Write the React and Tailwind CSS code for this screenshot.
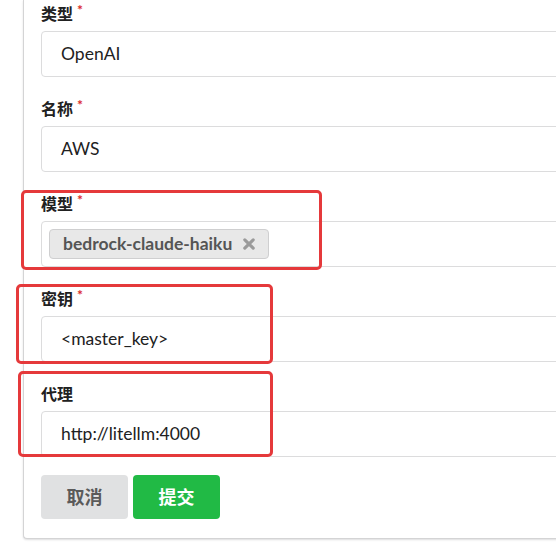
import React from 'react';

const fields = [
  { label: '类型', required: true, value: 'OpenAI' },
  { label: '名称', required: true, value: 'AWS' },
  { label: '模型', required: true, tag: 'bedrock-claude-haiku' },
  { label: '密钥', required: true, value: '<master_key>' },
  { label: '代理', required: false, value: 'http://litellm:4000' },
];

const Field = ({ field }) => (
  <div className="mb-[21px]">
    <div className="h-[22px] mb-[6px] flex items-center text-[16px] font-bold leading-[22px] text-[#212121]">
      {field.label}
      {field.required && <span className="ml-[4px] -mt-[9px] text-[14px] text-[#db2828]">*</span>}
    </div>
    <div className="h-[46px] w-full rounded-[4px] border border-[#dcdcdd] bg-white flex items-center px-[19px] text-[17.5px] text-[#212121]">
      {field.tag ? (
        <span className="-ml-[12px] h-[30px] flex items-center gap-[11px] rounded-[4px] border border-[#cfcfd0] bg-[#e8e8e8] pl-[13px] pr-[13px] font-bold text-[#555]">
          {field.tag}
          <svg width="12" height="12" viewBox="0 0 10 10">
            <path d="M1.5 1.5 L8.5 8.5 M8.5 1.5 L1.5 8.5" stroke="#9a9a9a" strokeWidth="2.6" strokeLinecap="round" />
          </svg>
        </span>
      ) : (
        field.value
      )}
    </div>
  </div>
);

const App = () => {
  return (
    <div
      className="relative h-[544px] w-[556px] overflow-hidden bg-white"
      style={{ fontFamily: 'Lato, "Noto Sans CJK SC", sans-serif' }}
    >
      <div className="ml-[23px] w-[620px] border-l border-b border-[#d4d4d5] rounded-bl-[4px] bg-white pl-[17px] pr-[40px] pt-[3px] pb-[19px] shadow-[0_1px_2px_0_rgba(34,36,38,0.15)]">
        {fields.map((f) => (
          <Field key={f.label} field={f} />
        ))}
        <div className="-mt-[3px] flex gap-[5px]">
          <button className="h-[44px] w-[87px] rounded-[4px] bg-[#e0e1e2] text-[18px] font-bold text-[#5a5a5a]">取消</button>
          <button className="h-[44px] w-[87px] rounded-[4px] bg-[#21ba45] text-[18px] font-bold text-white">提交</button>
        </div>
      </div>

      <div className="pointer-events-none absolute left-[21px] top-[190px] h-[80px] w-[301px] rounded-[5px] border-[3px] border-[#e5393b]" />
      <div className="pointer-events-none absolute left-[16px] top-[284px] h-[80px] w-[257px] rounded-[5px] border-[3px] border-[#e5393b]" />
      <div className="pointer-events-none absolute left-[18px] top-[371px] h-[86px] w-[255px] rounded-[5px] border-[3px] border-[#e5393b]" />
    </div>
  );
};

export default App;
